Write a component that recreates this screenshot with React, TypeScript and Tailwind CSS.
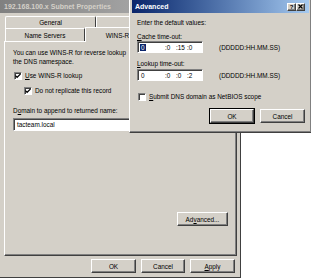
import React from 'react';

const btn =
  'flex items-center justify-center bg-[#d4d0c8] border border-t-white border-l-white border-r-[#404040] border-b-[#404040] shadow-[inset_-1px_-1px_#808080] text-black';

function Check({ checked }: { checked?: boolean }) {
  return (
    <div className="w-[8px] h-[8px] bg-white border border-t-[#808080] border-l-[#808080] border-r-white border-b-white shadow-[inset_1px_1px_#404040] flex items-center justify-center shrink-0">
      {checked && (
        <svg width="6" height="6" viewBox="0 0 7 7">
          <path d="M0.5 3 L2.5 5 L6.5 1" stroke="#000" strokeWidth="1.4" fill="none" />
        </svg>
      )}
    </div>
  );
}

function TimeBox({ first, rest }: { first: React.ReactNode; rest: string[] }) {
  return (
    <div className="w-[66px] h-[12px] bg-white border border-t-[#808080] border-l-[#808080] border-r-white border-b-white shadow-[inset_1px_1px_#404040] flex items-center pl-[2px] text-[6.4px]">
      <div className="w-[25px]">{first}</div>
      {rest.map((r, i) => (
        <div key={i} className="w-[11px]">{r}</div>
      ))}
    </div>
  );
}

export default function App() {
  return (
    <div
      className="relative w-[311px] h-[280px] bg-white overflow-hidden text-black text-[6.4px] leading-[9px]"
      style={{ fontFamily: '"Liberation Sans", Arial, sans-serif' }}
    >
      {/* Properties window (inactive) */}
      <div className="w-[241px] h-[278px] bg-[#d4d0c8] border-r border-b border-[#404040] flex flex-col">
        <div className="h-[13px] bg-gradient-to-r from-[#808080] to-[#c0c0c0] flex items-center pl-[4px]">
          <span className="font-bold text-[#d4d0c8] text-[7px]">192.168.100.x Subnet Properties</span>
        </div>

        {/* tabs */}
        <div className="mt-[3px] pl-[5px]">
          <div className="flex h-[12px]">
            <div className="w-[91px] border-t border-l border-white border-r border-r-[#404040] rounded-t-[2px] flex items-center justify-center">
              General
            </div>
            <div className="w-[100px] border-t border-l border-white" />
          </div>
          <div className="flex h-[13px]">
            <div className="w-[80px] border-t border-l border-white border-r border-r-[#404040] flex items-center justify-center">
              Name Servers
            </div>
            <div className="w-[64px] -mt-[1px] h-[15px] border-t border-l border-white bg-[#d4d0c8] relative z-10 flex items-center justify-center">
              WINS-R
            </div>
          </div>
        </div>

        {/* tab page */}
        <div className="ml-[4px] w-[233px] h-[215px] border border-t-white border-l-white border-r-[#404040] border-b-[#404040] shadow-[inset_-1px_-1px_#808080] flex flex-col pl-[8px] pt-[6px]">
          <div>You can use WINS-R for reverse lookup</div>
          <div>the DNS namespace.</div>
          <div className="flex items-center gap-[3px] mt-[5px] ml-[1px] h-[9px]">
            <Check checked />
            <span>
              <span className="underline">U</span>se WINS-R lookup
            </span>
          </div>
          <div className="flex items-center gap-[3px] mt-[6px] ml-[11px] h-[9px]">
            <Check checked />
            <span>Do not replicate this record</span>
          </div>
          <div className="mt-[11px]">
            D<span className="underline">o</span>main to append to returned name:
          </div>
          <div className="mt-[3px] w-[200px] h-[13px] bg-white border border-t-[#808080] border-l-[#808080] border-r-white border-b-white shadow-[inset_1px_1px_#404040] flex items-center pl-[3px]">
            tacteam.local
          </div>
          <div className="flex justify-end pr-[8px] mt-[81px]">
            <div className={btn + ' w-[51px] h-[14px]'}>
              Ad<span className="underline">v</span>anced...
            </div>
          </div>
        </div>

        {/* bottom buttons */}
        <div className="flex justify-end gap-[5px] mt-[3px] pr-[5px]">
          <div className={btn + ' w-[45px] h-[14px]'}>OK</div>
          <div className={btn + ' w-[44px] h-[14px]'}>Cancel</div>
          <div className={btn + ' w-[45px] h-[14px]'}>
            <span className="underline">A</span>pply
          </div>
        </div>
      </div>

      {/* Advanced dialog */}
      <div className="absolute z-20 left-[129px] top-0 w-[182px] h-[133px] bg-[#d4d0c8] border-l border-b border-l-white border-b-[#404040] shadow-[inset_-1px_-1px_#808080,1px_0_#404040] flex flex-col px-[2px]">
        <div className="h-[13px] bg-gradient-to-r from-[#0a246a] to-[#a6caf0] flex items-center pl-[3px] pr-[4px]">
          <span className="font-bold text-white text-[7px] flex-1">Advanced</span>
          <div className={btn + ' w-[9px] h-[8px] text-[6px] font-bold leading-none'}>?</div>
          <div className={btn + ' w-[9px] h-[8px]'}>
            <svg width="5" height="5" viewBox="0 0 5 5">
              <path d="M0.5 0.5 L4.5 4.5 M4.5 0.5 L0.5 4.5" stroke="#000" strokeWidth="1.2" />
            </svg>
          </div>
        </div>

        <div className="flex flex-col pl-[5px] pt-[5px]">
          <div>Enter the default values:</div>
          <div className="mt-[5px]">
            <span className="underline">C</span>ache time-out:
          </div>
          <div className="flex items-center">
            <TimeBox first={<span className="bg-[#0a246a] text-white px-[1px]">0</span>} rest={[':0', ':15', ':0']} />
            <span className="ml-[16px] mt-[1px]">(DDDDD:HH.MM.SS)</span>
          </div>
          <div className="mt-[6px]">
            <span className="underline">L</span>ookup time-out:
          </div>
          <div className="flex items-center mt-[1px]">
            <TimeBox first={<span className="pl-[1px]">0</span>} rest={[':0', ':0', ':2']} />
            <span className="ml-[16px] mt-[1px]">(DDDDD:HH.MM.SS)</span>
          </div>
          <div className="flex items-center gap-[3px] mt-[11px] ml-[1px] h-[9px]">
            <Check />
            <span>
              <span className="underline">S</span>ubmit DNS domain as NetBIOS scope
            </span>
          </div>
          <div className="flex justify-end gap-[6px] mt-[8px] pr-[4px]">
            <div className={btn + ' w-[44px] h-[14px] outline outline-1 outline-black'}>OK</div>
            <div className={btn + ' w-[45px] h-[14px]'}>Cancel</div>
          </div>
        </div>
      </div>
    </div>
  );
}
